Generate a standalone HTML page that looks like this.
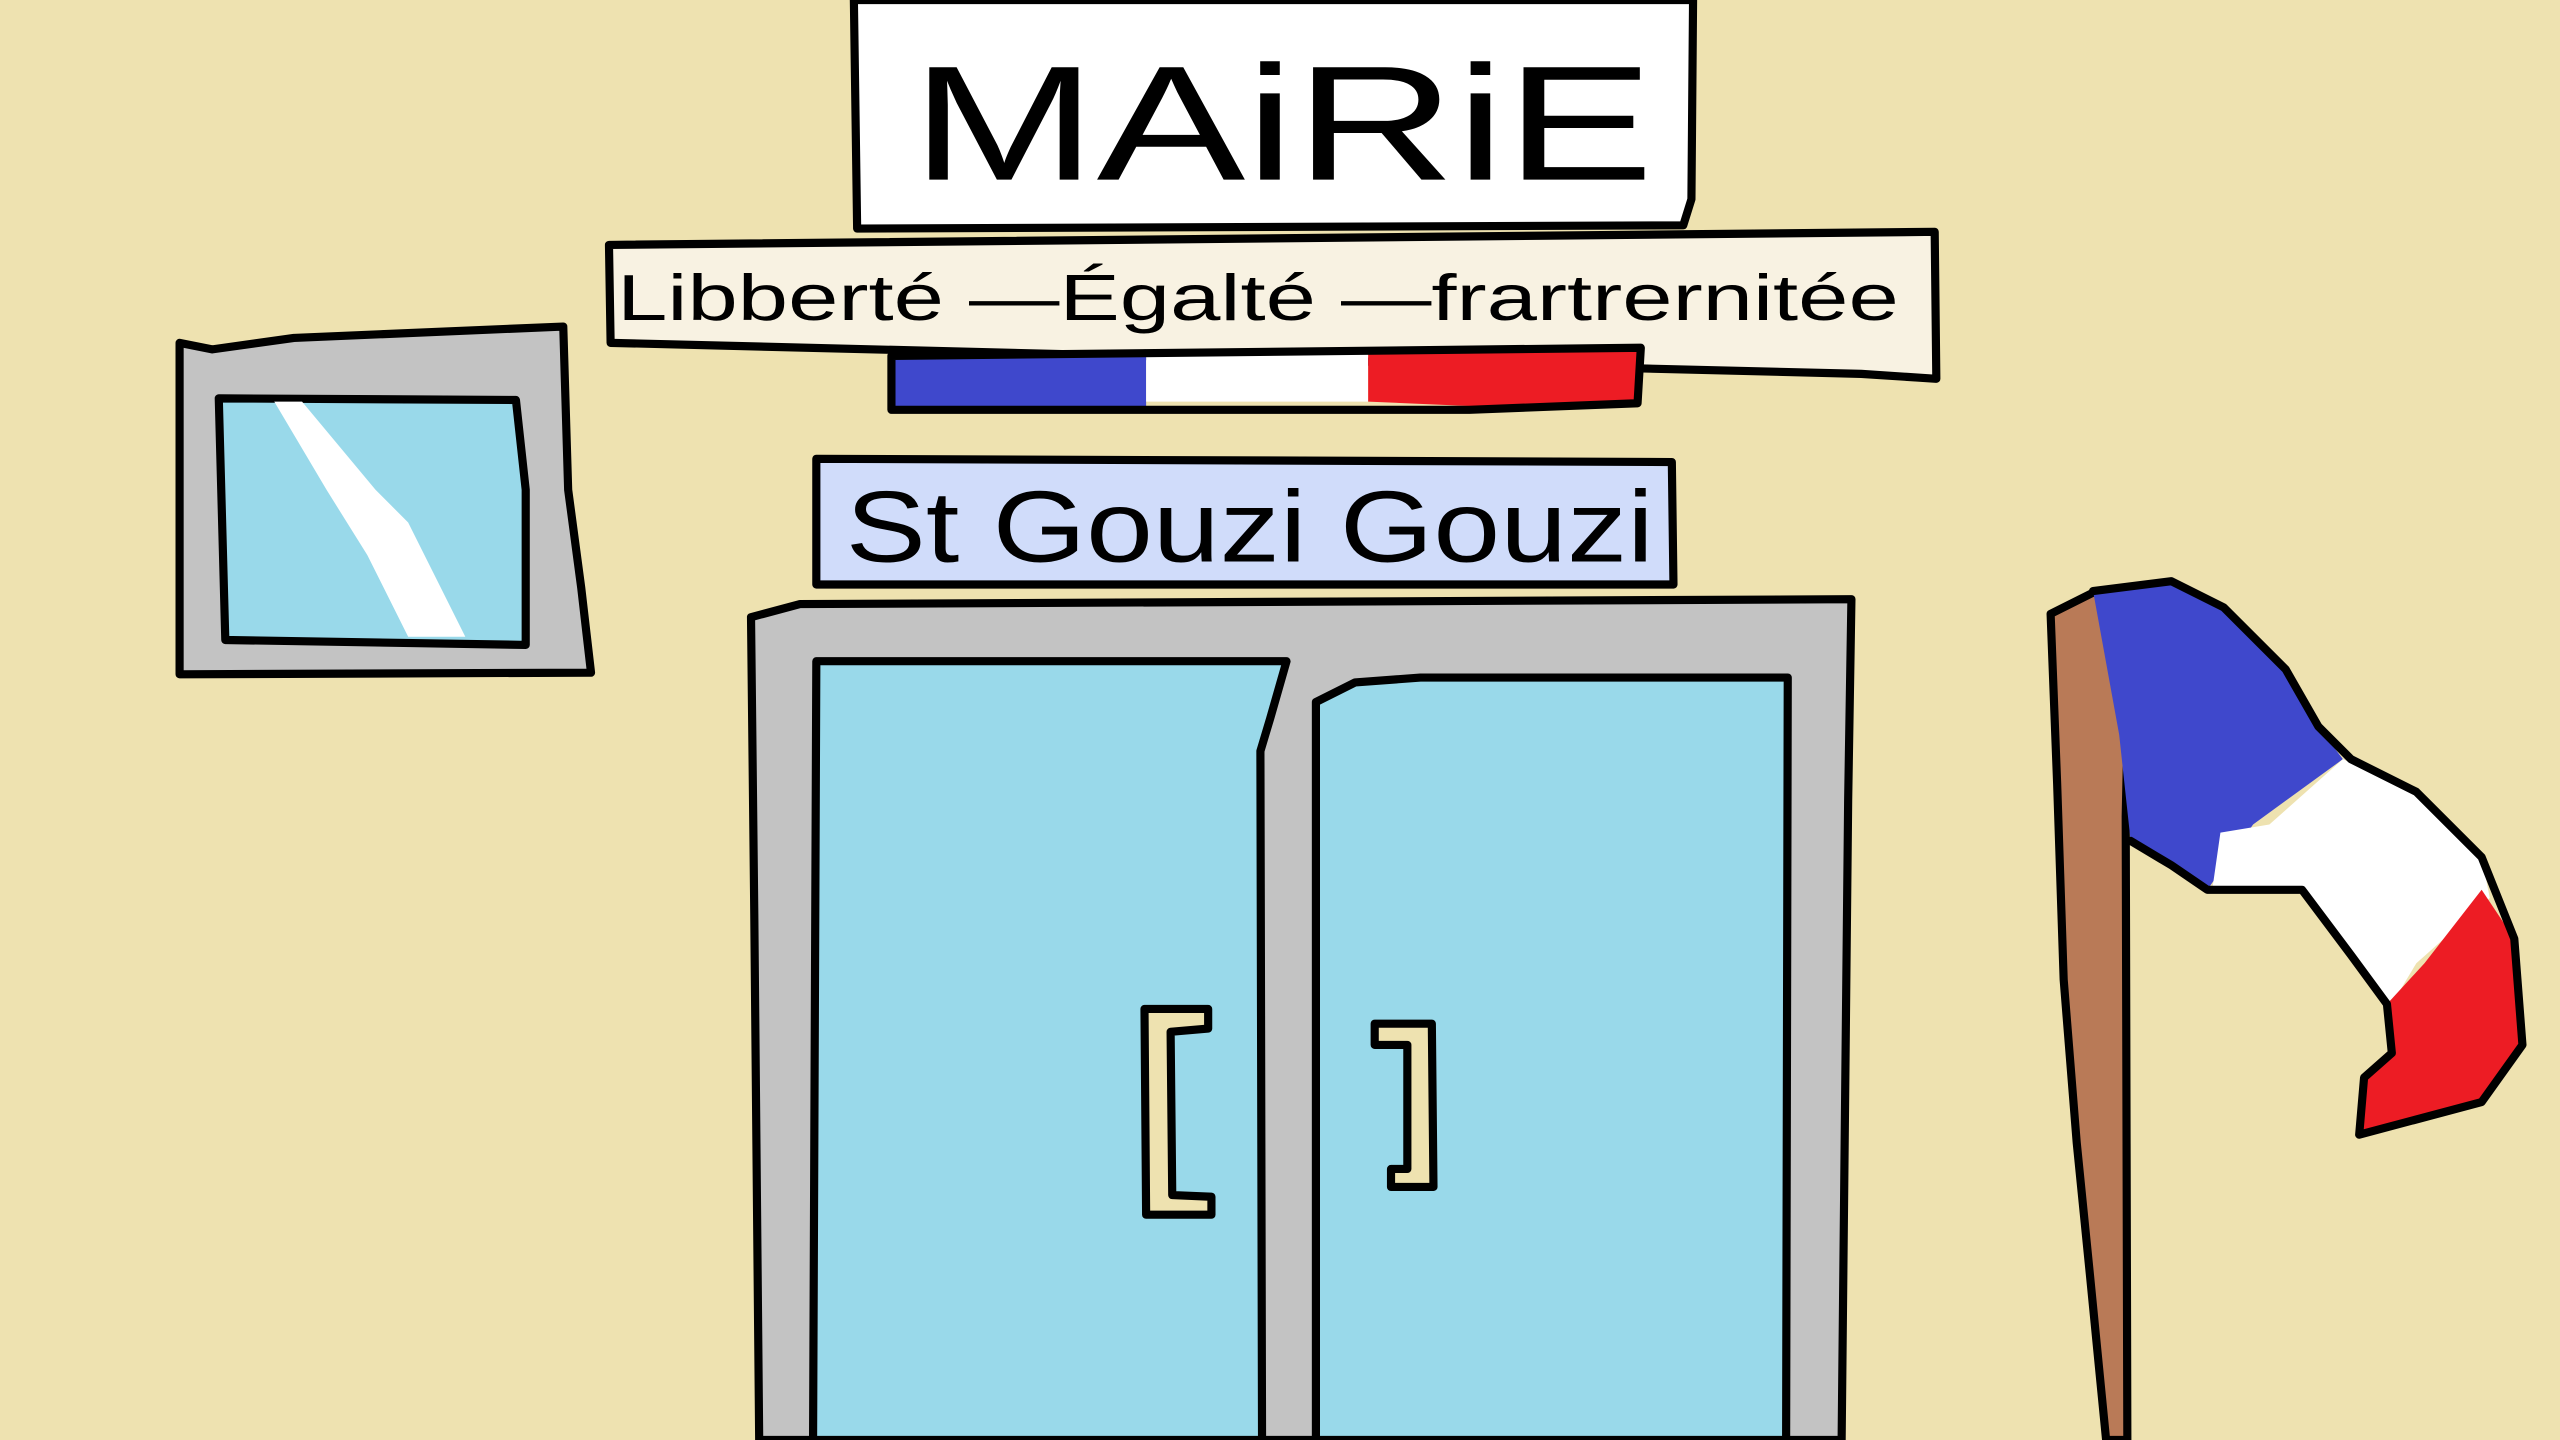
<!DOCTYPE html>
<html><head><meta charset="utf-8"><style>html,body{margin:0;padding:0;background:#EEE2B0;overflow:hidden}svg{display:block}</style></head>
<body>
<svg width="2560" height="1440" viewBox="0 0 1568 882" xmlns="http://www.w3.org/2000/svg" stroke-linejoin="round" stroke-linecap="round">
<rect width="1568" height="882" fill="#EEE2B0"/>
<!-- MAIRIE -->
<path d="M523 0 L1037 0 L1036 122 L1031 138 L525 140 Z" fill="#fff" stroke="#000" stroke-width="5"/>
<text x="558" y="110" font-family="Liberation Sans, sans-serif" font-size="100" fill="#000" textLength="455" lengthAdjust="spacingAndGlyphs">MAiRiE</text>
<!-- banner -->
<path d="M373 150 L1185 142 L1186 232 L1140 229 L374 210 Z" fill="#F8F2E2" stroke="#000" stroke-width="5"/>
<text x="378" y="196" font-family="Liberation Sans, sans-serif" font-size="40" fill="#000" textLength="785" lengthAdjust="spacingAndGlyphs">Libberté  —Égalté —frartrernitée</text>
<!-- flag strip -->
<path d="M546 218 L702 214 L702 250 L546 251 Z" fill="#3F48CC"/>
<path d="M702 214 L838 214 L838 246 L702 246 Z" fill="#fff"/>
<path d="M838 213 L1004 214 L1003 247 L930 250 L838 246 Z" fill="#ED1C24"/>
<path d="M546 218 L1005 213 L1003 247 L900 251 L546 251 Z" fill="none" stroke="#000" stroke-width="5"/>
<!-- sign -->
<path d="M500 281 L1024 283 L1025 358 L500 358 Z" fill="#D0DCFA" stroke="#000" stroke-width="5"/>
<text x="518" y="344" font-family="Liberation Sans, sans-serif" font-size="62" fill="#000" textLength="495" lengthAdjust="spacingAndGlyphs">St Gouzi Gouzi</text>
<!-- door frame -->
<path d="M460 378 L490 370 L1134 367 L1132 490 L1128 882 L465 882 L462 560 Z" fill="#C3C3C3" stroke="#000" stroke-width="5"/>
<path d="M498 882 L500 405 L788 405 L778 440 L772 460 L773 882 Z" fill="#99D9EA" stroke="#000" stroke-width="5"/>
<path d="M806 882 L806 430 L830 418 L870 415 L1095 415 L1094 882 Z" fill="#99D9EA" stroke="#000" stroke-width="5"/>
<!-- handles -->
<path d="M701 618 L740 618 L740 630 L717 632 L718 732 L742 733 L742 744 L702 744 Z" fill="#EEE2B0" stroke="#000" stroke-width="5"/>
<path d="M842 627 L877 627 L878 727 L852 727 L852 716 L862 716 L862 640 L842 640 Z" fill="#EEE2B0" stroke="#000" stroke-width="5"/>
<!-- window -->
<path d="M110 210 L130 214 L180 207 L345 200 L348 300 L356 360 L362 412 L110 413 Z" fill="#C3C3C3" stroke="#000" stroke-width="5"/>
<path d="M134 244 L316 245 L322 300 L322 395 L138 392 Z" fill="#99D9EA" stroke="#000" stroke-width="5"/>
<path d="M168 246 L185 246 L230 300 L250 320 L285 390 L250 390 L225 340 L200 300 Z" fill="#fff"/>
<!-- pole -->
<path d="M1256 376 L1282 363 L1305 360 L1302 500 L1303 882 L1290 882 L1280 780 L1272 700 L1264 600 L1260 480 Z" fill="#B97A57" stroke="#000" stroke-width="5"/>
<!-- flag -->
<path d="M1282 362 L1330 356 L1362 372 L1400 410 L1420 445 L1435 465 L1380 505 L1352 545 L1330 530 L1305 515 L1298 450 Z" fill="#3F48CC"/>
<path d="M1435 465 L1480 485 L1520 525 L1525 550 L1480 590 L1465 615 L1440 585 L1410 545 L1355 545 L1360 510 L1390 505 Z" fill="#fff"/>
<path d="M1520 545 L1540 575 L1545 640 L1520 675 L1445 695 L1448 660 L1465 645 L1462 615 L1485 590 Z" fill="#ED1C24"/>
<path d="M1282 362 L1330 356 L1362 372 L1400 410 L1420 445 L1440 465 L1480 485 L1520 525 L1540 575 L1545 640 L1520 675 L1445 695 L1448 660 L1465 645 L1462 615 L1440 585 L1410 545 L1352 545 L1330 530 L1305 515" fill="none" stroke="#000" stroke-width="5"/>
</svg>
</body></html>
